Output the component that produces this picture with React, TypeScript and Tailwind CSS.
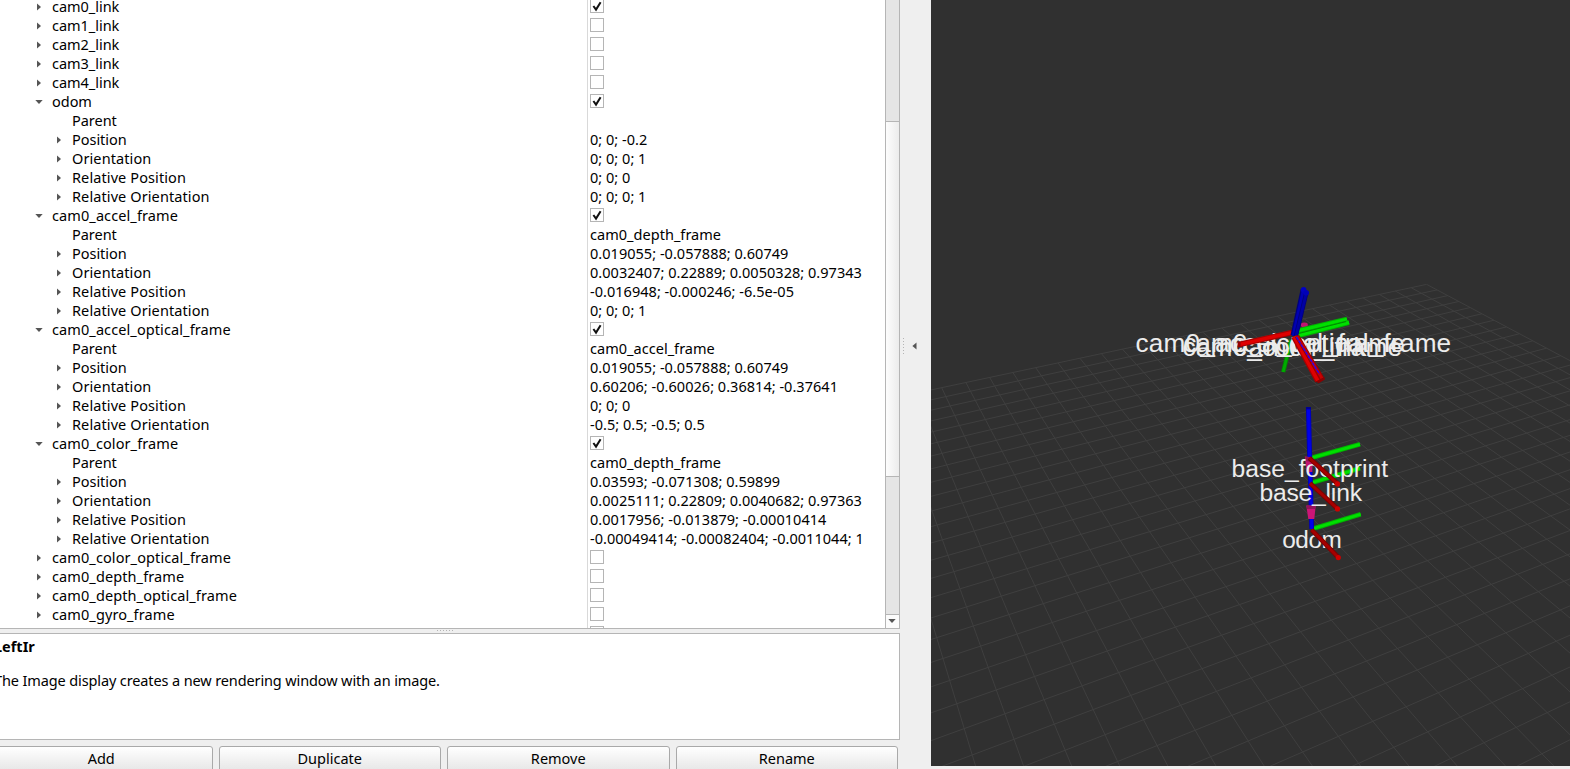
import React from "react";

type Row = {
  label: string;
  depth: 0 | 1;
  arrow?: "open" | "closed";
  checked?: boolean;
  value?: string;
};

const closed = (label: string, checked = false): Row => ({ label, depth: 0, arrow: "closed", checked });

const frame = (label: string, parent: string, pos: string, ori: string, relPos: string, relOri: string): Row[] => [
  { label, depth: 0, arrow: "open", checked: true },
  { label: "Parent", depth: 1, value: parent },
  { label: "Position", depth: 1, arrow: "closed", value: pos },
  { label: "Orientation", depth: 1, arrow: "closed", value: ori },
  { label: "Relative Position", depth: 1, arrow: "closed", value: relPos },
  { label: "Relative Orientation", depth: 1, arrow: "closed", value: relOri },
];

const rows: Row[] = [
  closed("cam0_link", true),
  closed("cam1_link"),
  closed("cam2_link"),
  closed("cam3_link"),
  closed("cam4_link"),
  ...frame("odom", "", "0; 0; -0.2", "0; 0; 0; 1", "0; 0; 0", "0; 0; 0; 1"),
  ...frame(
    "cam0_accel_frame",
    "cam0_depth_frame",
    "0.019055; -0.057888; 0.60749",
    "0.0032407; 0.22889; 0.0050328; 0.97343",
    "-0.016948; -0.000246; -6.5e-05",
    "0; 0; 0; 1",
  ),
  ...frame(
    "cam0_accel_optical_frame",
    "cam0_accel_frame",
    "0.019055; -0.057888; 0.60749",
    "0.60206; -0.60026; 0.36814; -0.37641",
    "0; 0; 0",
    "-0.5; 0.5; -0.5; 0.5",
  ),
  ...frame(
    "cam0_color_frame",
    "cam0_depth_frame",
    "0.03593; -0.071308; 0.59899",
    "0.0025111; 0.22809; 0.0040682; 0.97363",
    "0.0017956; -0.013879; -0.00010414",
    "-0.00049414; -0.00082404; -0.0011044; 1",
  ),
  closed("cam0_color_optical_frame"),
  closed("cam0_depth_frame"),
  closed("cam0_depth_optical_frame"),
  closed("cam0_gyro_frame"),
  closed("cam0_gyro_optical_frame"),
];

function Arrow({ kind }: { kind?: "open" | "closed" }) {
  return (
    <svg width="8" height="8" viewBox="0 0 8 8" className="shrink-0">
      {kind === "closed" && <path d="M2 0.6 L6 4.1 L2 7.6 Z" fill="#555" />}
      {kind === "open" && <path d="M0.3 2 L7.7 2 L4 6 Z" fill="#555" />}
    </svg>
  );
}

function Check({ checked }: { checked?: boolean }) {
  return (
    <span className="mb-px flex h-3.5 w-3.5 shrink-0 border border-[#b5b5b5] bg-white">
      {checked && (
        <svg width="12" height="12" viewBox="0 0 12 12">
          <path d="M2.4 6 L5 9.6 L9.6 2.2" fill="none" stroke="#111" strokeWidth="2" />
        </svg>
      )}
    </span>
  );
}

function TreeRow({ row }: { row: Row }) {
  return (
    <div className="flex h-[19px] shrink-0">
      <div className={"flex w-[587px] items-center gap-[9px] " + (row.depth === 0 ? "pl-[35px]" : "pl-[55px]")}>
        <Arrow kind={row.arrow} />
        <span className={row.label.length > 9 ? "tracking-[0.1px]" : "tracking-[-0.03px]"}>{row.label}</span>
      </div>
      <div className="flex w-[298px] items-center border-l border-[#d9d9d9] pl-0.5">
        {row.value === undefined ? (
          <Check checked={row.checked} />
        ) : (
          <span className="tracking-[0.03px]">{row.value}</span>
        )}
      </div>
    </div>
  );
}

function Scrollbar() {
  return (
    <div className="flex w-[15px] shrink-0 flex-col border-x border-[#b5b5b5]">
      <div className="h-[121px] bg-[#e5e5e5]" />
      <div className="h-[356px] border-y border-[#b5b5b5] bg-gradient-to-r from-[#fdfdfd] to-[#ececec]" />
      <div className="h-[137px] bg-[#e5e5e5]" />
      <div className="flex flex-1 items-center justify-center border-t border-[#b5b5b5] bg-[#fbfbfb] pr-px pb-px">
        <Arrow kind="open" />
      </div>
    </div>
  );
}

function Dots({ vertical }: { vertical?: boolean }) {
  return (
    <div className={"flex gap-0.5 " + (vertical ? "flex-col" : "")}>
      {[0, 1, 2, 3, 4, 5].map((n) => (
        <span key={n} className="h-px w-px bg-[#b4b4b4]" />
      ))}
    </div>
  );
}

/* Ground plane: perspective map from cell (i, j) to screen position. */
const FAR_I = 25;
function project(i: number, j: number) {
  const w = 1 + 0.0105 * i - 0.0182 * j;
  const x = (35 + 73.84 * i + 11.75 * j) / w;
  const y = (23 - 15.41 * i + 25.9 * j) / w;
  return `${(930 + x / 3).toFixed(2)} ${(380 + y / 3).toFixed(2)}`;
}

function Grid() {
  const segs: string[] = [];
  for (let i = -12; i <= FAR_I; i++) {
    const end = Math.min(45, (0.9 + 0.0105 * i) / 0.0182);
    segs.push(`M${project(i, 0)} L${project(i, end)}`);
  }
  for (let j = 0; j <= 45; j++) {
    const start = Math.max(-12, (0.1 - 1 + 0.0182 * j) / 0.0105);
    segs.push(`M${project(start, j)} L${project(FAR_I, j)}`);
  }
  return <path d={segs.join(" ")} fill="none" stroke="#3f3f3f" strokeWidth="1" />;
}

type BarProps = { a: [number, number]; b: [number, number]; w: number; dark: string; mid: string };
function Bar({ a, b, w, dark, mid }: BarProps) {
  return (
    <g>
      <line x1={a[0]} y1={a[1]} x2={b[0]} y2={b[1]} stroke={dark} strokeWidth={w} />
      <line x1={a[0]} y1={a[1]} x2={b[0]} y2={b[1]} stroke={mid} strokeWidth={w * 0.6} />
    </g>
  );
}

const GREEN = { dark: "#00b400", mid: "#00e000" };
const RED = { dark: "#7c0000", mid: "#a60000" };
const BLUE = { dark: "#0000b8", mid: "#0000ea" };

function Scene() {
  return (
    <svg
      width="639"
      height="766"
      viewBox="931 0 639 766"
      className="block bg-[#303030]"
      fontFamily="'Liberation Sans', Arial, sans-serif"
      fill="#ececec"
    >
      <Grid />

      <Bar a={[1311, 458]} b={[1360, 444.3]} w={4.6} {...GREEN} />
      <Bar a={[1311, 483]} b={[1360, 468.3]} w={4.6} {...GREEN} />
      <Bar a={[1312, 529]} b={[1360.7, 514.3]} w={4.6} {...GREEN} />
      <Bar a={[1308.4, 407.5]} b={[1309.7, 459]} w={5} {...BLUE} />
      <Bar a={[1310.1, 470]} b={[1311.7, 529]} w={4.8} {...BLUE} />
      <rect x="1306" y="407" width="5" height="2.4" fill="#000090" />
      <path d="M1304.8 456.5 L1312.6 457.5 L1312.3 472 L1306.8 472 Z" fill="#c0156f" />
      <path d="M1305 456.5 L1312.6 457.5 L1311 462 L1306 461 Z" fill="#8e1457" />
      <path d="M1306.3 505.5 L1315.7 505.5 L1314.3 519 L1308.3 519 Z" fill="#cc1577" />
      <path d="M1306.3 505.5 L1315.7 505.5 L1315 509 L1307 509 Z" fill="#96135b" />

      <text x="1231.4" y="477.3" fontSize="24.7" textLength="156.6">base_footprint</text>
      <text x="1259.4" y="501.3" fontSize="24.7" textLength="102.6">base_link</text>
      <text x="1282.2" y="547.6" fontSize="24.4" textLength="59.6">odom</text>

      <Bar a={[1309.3, 458]} b={[1337.8, 484]} w={4.6} {...RED} />
      <Bar a={[1310, 483.2]} b={[1337.8, 509]} w={4.6} {...RED} />
      <Bar a={[1311.7, 529.8]} b={[1338.5, 557.7]} w={4.6} {...RED} />
      <circle cx="1337.5" cy="483.9" r="2.6" fill="#cc0000" />
      <circle cx="1337.5" cy="508.9" r="2.6" fill="#cc0000" />
      <circle cx="1338.3" cy="557.6" r="2.6" fill="#cc0000" />

      <ellipse cx="1304.3" cy="325" rx="3.6" ry="2.4" fill="#c0156f" />
      <Bar a={[1291, 340]} b={[1283.2, 372]} w={4.4} dark="#008a00" mid="#00ac00" />
      <text x="1135.6" y="351.7" fontSize="26.2" textLength="315.6">cam0_accel_optical_frame</text>
      <text x="1183.2" y="351.7" fontSize="26.2" textLength="221.5">cam0_accel_frame</text>
      <text x="1182.6" y="355.9" fontSize="26.2" textLength="219.5">cam0_color_frame</text>
      <text x="1233.5" y="355.9" fontSize="26.2" textLength="133">cam0_link</text>

      <Bar a={[1293, 332.3]} b={[1239, 344.6]} w={5.6} dark="#a80000" mid="#e00000" />
      <rect x="1237.6" y="341.6" width="3" height="5.6" fill="#980000" />
      <Bar a={[1295, 331.6]} b={[1347, 319.2]} w={5.2} {...GREEN} />
      <Bar a={[1297, 335.8]} b={[1349, 322.4]} w={5.2} {...GREEN} />
      <path d="M1299 333.4 L1346 321.6" stroke="#008c00" strokeWidth="1" />
      <Bar a={[1293.6, 335.8]} b={[1303.8, 290]} w={6.4} dark="#00007c" mid="#0000b4" />
      <Bar a={[1295.8, 336.4]} b={[1306.4, 292.6]} w={4.4} dark="#00007c" mid="#0000a4" />
      <circle cx="1303.6" cy="289.8" r="2.8" fill="#0000c4" />
      <circle cx="1306.2" cy="292.8" r="2.8" fill="#0000b8" />
      <Bar a={[1294, 336.5]} b={[1318, 381]} w={6} dark="#a80000" mid="#e00000" />
      <Bar a={[1297, 336]} b={[1322, 378.5]} w={4.6} dark="#980000" mid="#c80000" />
      <path d="M1296.4 337 L1319.4 374" stroke="#2d00e8" strokeWidth="1.5" strokeDasharray="3.6 0.7" />
      <path d="M1315.6 381.6 L1324.6 377 L1324.8 379.4 L1318.6 383.2 Z" fill="#8c0000" />
    </svg>
  );
}

function PushButton({ label }: { label: string }) {
  return (
    <button className="h-[26px] flex-1 rounded-[3px] border border-[#a9a9a9] bg-gradient-to-b from-white to-[#e6e6e6] pb-0.5 text-center leading-[22px]">
      {label}
    </button>
  );
}

export default function App() {
  return (
    <div className="flex h-[769px] w-[1570px] overflow-hidden bg-[#efefef] font-['Noto_Sans','Open_Sans',sans-serif] text-[14.5px] leading-[19px] whitespace-pre text-black">
      <div className="flex w-[900px] shrink-0 flex-col">
        <div className="flex h-[629px] shrink-0 overflow-hidden border-b border-[#b5b5b5] bg-white">
          <div className="-mt-[3px] flex w-[885px] shrink-0 flex-col">
            {rows.map((row, n) => (
              <TreeRow key={n} row={row} />
            ))}
          </div>
          <Scrollbar />
        </div>
        <div className="flex h-1 shrink-0 items-center justify-center pr-2.5 pb-px">
          <Dots />
        </div>
        <div className="-ml-[9px] h-[107px] shrink-0 border border-[#b5b5b5] bg-white pt-[3px] pl-0.5">
          <p className="font-bold">LeftIr</p>
          <p className="mt-[15px] tracking-[-0.12px]">The Image display creates a new rendering window with an image.</p>
        </div>
        <div className="mt-1.5 -ml-2.5 mr-0.5 flex shrink-0 gap-1.5">
          <PushButton label="Add" />
          <PushButton label="Duplicate" />
          <PushButton label="Remove" />
          <PushButton label="Rename" />
        </div>
      </div>
      <div className="flex w-[31px] shrink-0 items-center pb-[77px] pl-[3px]">
        <Dots vertical />
        <svg width="6" height="8" viewBox="0 0 6 8" className="ml-[7px]">
          <path d="M5.5 0.5 L1.4 4 L5.5 7.5 Z" fill="#555" />
        </svg>
      </div>
      <Scene />
    </div>
  );
}
